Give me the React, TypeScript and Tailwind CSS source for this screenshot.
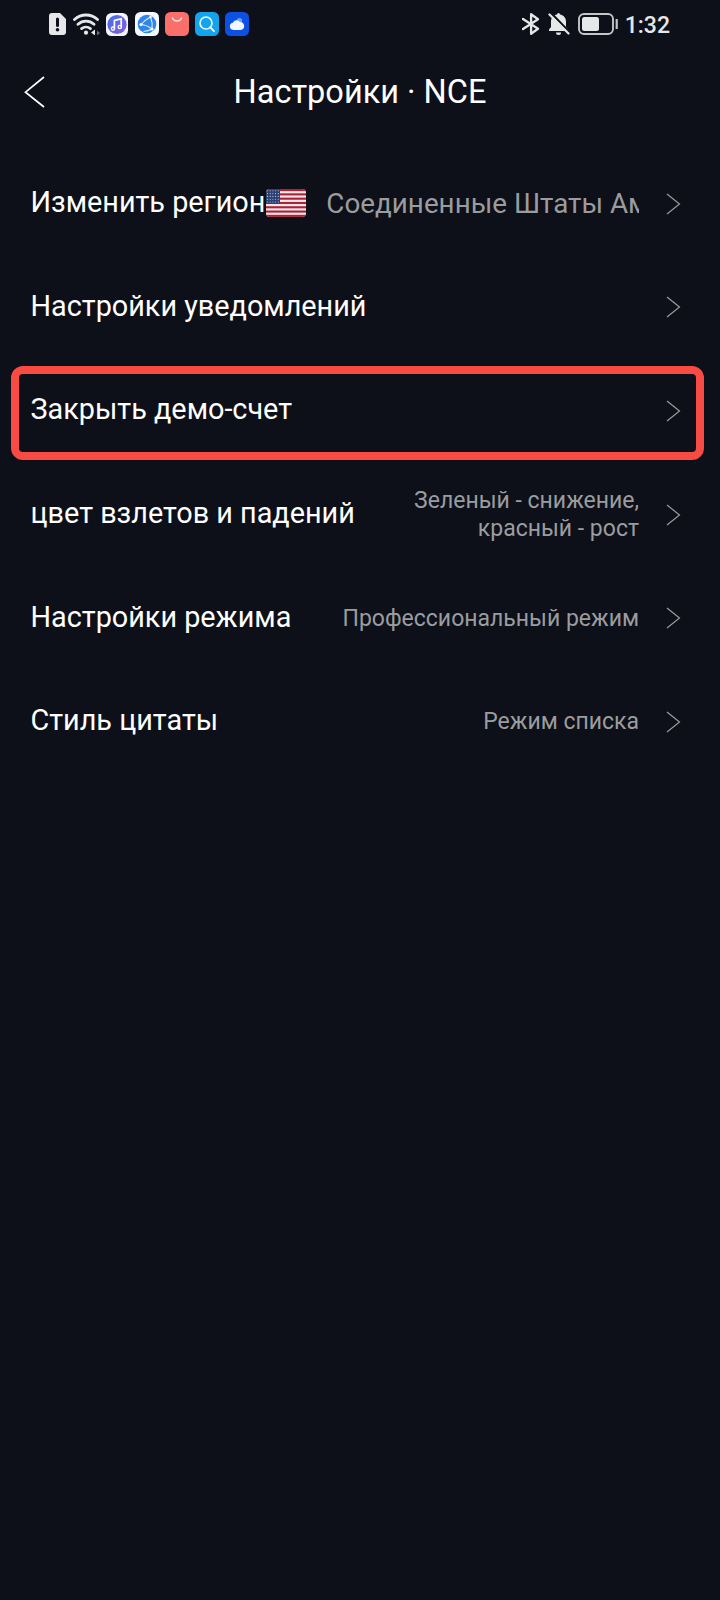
import React from "react";

const ROWS = [
  { label: "Изменить регион", value: "Соединенные Штаты Америки", flag: true },
  { label: "Настройки уведомлений" },
  { label: "Закрыть демо-счет", marked: true },
  { label: "цвет взлетов и падений", value: "Зеленый - снижение, красный - рост" },
  { label: "Настройки режима", value: "Профессиональный режим" },
  { label: "Стиль цитаты", value: "Режим списка" },
];

function StatusBar() {
  return (
    <div className="flex h-12 items-center justify-between pl-[49px] pr-[50px] text-[#e6e7e9]">
      <div className="flex items-center">
        <svg width="17" height="22" viewBox="0 0 17 22">
          <path d="M3 0h8l6 6v13a3 3 0 0 1-3 3H3a3 3 0 0 1-3-3V3a3 3 0 0 1 3-3z" fill="#e6e7e9" />
          <path d="M8.5 6v6.5" stroke="#0d1018" strokeWidth="3" strokeLinecap="round" />
          <circle cx="8.5" cy="16.7" r="1.8" fill="#0d1018" />
        </svg>
        <svg className="ml-[7px]" width="27" height="22" viewBox="0 0 27 22" fill="none">
          <path
            d="M1.5 6.5a17 17 0 0 1 23 0M5 11.2a12 12 0 0 1 16 0M8.6 15.6a7 7 0 0 1 8.8 0"
            stroke="#e6e7e9"
            strokeWidth="2.8"
            strokeLinecap="round"
          />
          <circle cx="13" cy="19.7" r="2.1" fill="#e6e7e9" />
          <path d="M22 16.5v6l-4-3z" fill="#e6e7e9" />
          <path d="M24 17.5v5l3-2.5z" fill="#6b6e74" />
        </svg>
        <svg className="ml-[6px]" width="22" height="23" viewBox="0 0 22 23" fill="none">
          <rect width="22" height="23" rx="5.5" fill="#f4f6ff" />
          <circle cx="11" cy="11.5" r="9.6" fill="url(#music)" />
          <path d="M8.4 15.5V7.4l6.8-1.6v8" stroke="#fff" strokeWidth="1.7" />
          <circle cx="7" cy="15.6" r="1.6" stroke="#fff" strokeWidth="1.4" />
          <circle cx="13.8" cy="14" r="1.6" stroke="#fff" strokeWidth="1.4" />
          <defs>
            <linearGradient id="music" x1="0" y1="0" x2="1" y2="1">
              <stop stopColor="#3f6fe6" />
              <stop offset="1" stopColor="#8a5de0" />
            </linearGradient>
          </defs>
        </svg>
        <svg className="ml-[7px]" width="24" height="24" viewBox="0 0 24 24" fill="none">
          <rect width="24" height="24" rx="5.5" fill="#f6f9ff" />
          <circle cx="12" cy="12" r="9.3" fill="#2f86ea" />
          <path
            d="M6 12.5q4-4.500 9.500-7.500M6 12.500q6 .5 11 4.500M15.500 5q2.500 6 1.500 12M8.500 19.500q5-.5 8.500-2.500"
            stroke="#d7ebff"
            strokeWidth="1.1"
          />
          <circle cx="6" cy="12.5" r="1.6" fill="#f6f9ff" />
          <circle cx="15.5" cy="5" r="1.3" fill="#f6f9ff" />
          <circle cx="17" cy="17" r="1.6" fill="#f6f9ff" />
        </svg>
        <svg className="ml-[6px]" width="24" height="24" viewBox="0 0 24 24" fill="none">
          <rect width="24" height="24" rx="5.5" fill="#fb6f6b" />
          <path d="M7.5 6a4.7 4.2 0 0 0 9 0" stroke="#ffe3df" strokeWidth="1.4" strokeLinecap="round" />
        </svg>
        <svg className="ml-[6px]" width="24" height="24" viewBox="0 0 24 24" fill="none">
          <rect width="24" height="24" rx="5.5" fill="#12a5ee" />
          <circle cx="11" cy="11" r="6" stroke="#e9f8ff" strokeWidth="1.7" />
          <path d="M15.3 15.3l3.7 3.9" stroke="#e9f8ff" strokeWidth="1.9" strokeLinecap="round" />
        </svg>
        <svg className="ml-[6px]" width="24" height="24" viewBox="0 0 24 24">
          <rect width="24" height="24" rx="5.5" fill="#0d50e4" />
          <circle cx="14.5" cy="8.5" r="2.6" fill="#6f9ff5" />
          <path
            d="M8.3 18a3.7 3.7 0 0 1-.5-7.3 4.2 4.2 0 0 1 7.2-.6 4 4 0 0 1 1 7.9z"
            fill="#f2f6ff"
          />
        </svg>
      </div>
      <div className="flex items-center">
        <svg width="18" height="22" viewBox="0 0 18 22" fill="none">
          <path
            d="M1 6l15 9.8-6.9 5V1.2l6.9 5L1 16"
            stroke="#e6e7e9"
            strokeWidth="2.3"
            strokeLinejoin="round"
            strokeLinecap="round"
          />
        </svg>
        <svg className="ml-[8px]" width="22" height="22" viewBox="0 0 22 22" fill="none">
          <path
            d="M10.5 0a1.5 1.5 0 0 1 1.5 1.5c3.7.7 6 3.5 6 7V14l2 2.5V18H1v-1.5L3 14V8.5c0-3.5 2.3-6.3 6-7A1.5 1.5 0 0 1 10.5 0z"
            fill="#e6e7e9"
          />
          <path d="M8 19.5h5a2.5 2.5 0 0 1-5 0z" fill="#e6e7e9" />
          <path d="M3 0l19 19.5" stroke="#0d1018" strokeWidth="2.2" />
          <path d="M1.5 1.5l19 19" stroke="#e6e7e9" strokeWidth="2.2" strokeLinecap="round" />
        </svg>
        <svg className="ml-[8px]" width="40" height="22" viewBox="0 0 40 22" fill="none">
          <rect x="1" y="1" width="34" height="20" rx="5" stroke="#c4c6c9" strokeWidth="1.9" />
          <rect x="4" y="4" width="17" height="14" rx="2.5" fill="#e6e7e9" />
          <path d="M38.7 6v10" stroke="#c4c6c9" strokeWidth="2.2" />
        </svg>
        <span className="mt-[2px] ml-[7px] text-[23px] leading-none font-medium">1:32</span>
      </div>
    </div>
  );
}

function Flag() {
  const stripes = [0, 1, 2, 3, 4, 5, 6];
  const stars = [0, 1, 2, 3, 4];

  return (
    <svg
      className="mt-[2px] ml-[1px] h-[28px] w-[40px] flex-none rounded-[4px]"
      viewBox="0 0 40 28"
    >
      <rect width="40" height="28" fill="#fbe9ec" />
      {stripes.map((i) => (
        <rect key={i} y={i * 4.3} width="40" height="2.15" fill="#a9243a" />
      ))}
      <rect width="14" height="15" fill="#2c4275" />
      {stars.map((r) =>
        stars.map((c) => (
          <circle
            key={`${r}-${c}`}
            cx={1.5 + c * 2.7}
            cy={1.8 + r * 2.8}
            r="0.55"
            fill="#c3cde0"
          />
        ))
      )}
    </svg>
  );
}

function Row({ label, value, flag, marked }: any) {
  return (
    <div className="relative flex h-[103.6px] items-center pl-[30.5px] pr-[39px]">
      {marked && (
        <div className="absolute top-[9px] left-[11px] h-[94px] w-[693px] rounded-[12px] border-8 border-[#f84b44]" />
      )}
      <span className="mt-[1px] flex-none text-[28.8px] leading-[34px] whitespace-nowrap text-white">
        {label}
      </span>
      {flag && <Flag />}
      <div className="flex min-w-0 flex-1 justify-end">
        {value &&
          (flag ? (
            <span className="mt-[5px] ml-[20px] flex-1 overflow-hidden text-[27.8px] leading-[34px] whitespace-nowrap text-[#9b9c9f]">
              {value}
            </span>
          ) : (
            <span className="mt-[5px] max-w-[305px] text-right text-[23px] leading-[28px] text-[#9b9c9f]">
              {value}
            </span>
          ))}
      </div>
      <svg className="mt-[4px] ml-[27px] flex-none" width="15" height="22" viewBox="0 0 15 22" fill="none">
        <path d="M1 1l12.5 10L1 21" stroke="#9b9c9f" strokeWidth="1.2" />
      </svg>
    </div>
  );
}

function App() {
  return (
    <div className="min-h-[1600px] w-[720px] overflow-hidden bg-[#0d1018] font-['Roboto','Noto_Sans',sans-serif]">
      <StatusBar />
      <header className="relative flex h-[88px] items-center justify-center">
        <svg
          className="absolute top-[28px] left-[24px]"
          width="22"
          height="32"
          viewBox="0 0 22 32"
          fill="none"
        >
          <path d="M20 1L1.5 16.2 20 31" stroke="#fff" strokeWidth="1.7" />
        </svg>
        <h1 className="text-[32.5px] leading-none text-white">Настройки · NCE</h1>
      </header>
      <main className="pt-[14px]">
        {ROWS.map((row) => (
          <Row key={row.label} {...row} />
        ))}
      </main>
    </div>
  );
}

export default App;
